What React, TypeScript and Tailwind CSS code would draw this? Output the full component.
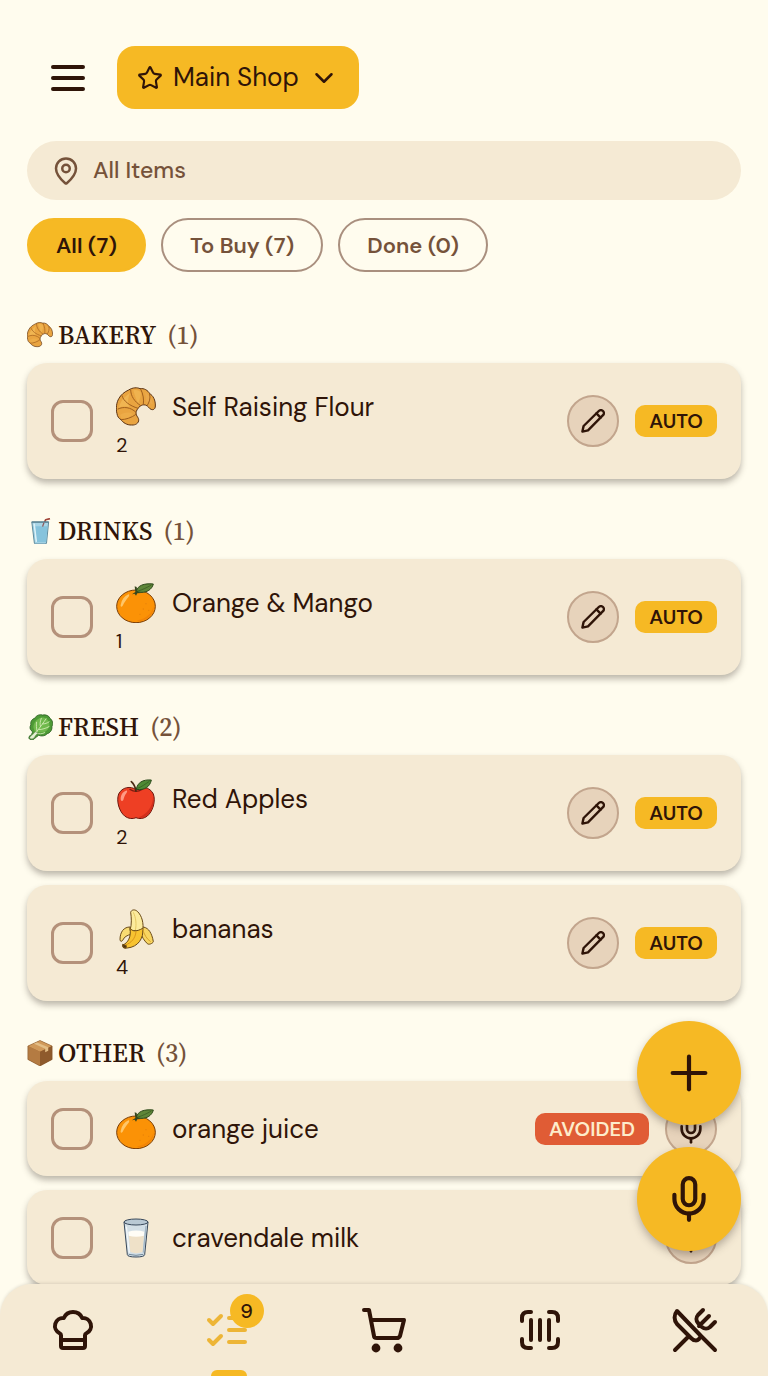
import React, { useState } from "react";
import { ChefHat, ChevronDown, MapPin, Mic, Plus, Star } from "lucide-react";

type EmojiName =
  | "croissant"
  | "cup"
  | "lettuce"
  | "orange"
  | "apple"
  | "banana"
  | "box"
  | "milk";

interface Item {
  id: string;
  name: string;
  emoji: EmojiName;
  qty?: number;
  badge?: "AUTO" | "AVOIDED";
  action: "edit" | "voice";
}

interface Section {
  title: string;
  emoji: EmojiName;
  count: number;
  items: Item[];
}

const sections: Section[] = [
  {
    title: "BAKERY",
    emoji: "croissant",
    count: 1,
    items: [
      { id: "flour", name: "Self Raising Flour", emoji: "croissant", qty: 2, badge: "AUTO", action: "edit" },
    ],
  },
  {
    title: "DRINKS",
    emoji: "cup",
    count: 1,
    items: [
      { id: "mango", name: "Orange & Mango", emoji: "orange", qty: 1, badge: "AUTO", action: "edit" },
    ],
  },
  {
    title: "FRESH",
    emoji: "lettuce",
    count: 2,
    items: [
      { id: "apples", name: "Red Apples", emoji: "apple", qty: 2, badge: "AUTO", action: "edit" },
      { id: "bananas", name: "bananas", emoji: "banana", qty: 4, badge: "AUTO", action: "edit" },
    ],
  },
  {
    title: "OTHER",
    emoji: "box",
    count: 3,
    items: [
      { id: "juice", name: "orange juice", emoji: "orange", badge: "AVOIDED", action: "voice" },
      { id: "milk", name: "cravendale milk", emoji: "milk", action: "voice" },
    ],
  },
];

const filters = [
  { id: "all", label: "All (7)" },
  { id: "buy", label: "To Buy (7)" },
  { id: "done", label: "Done (0)" },
];

// all food drawings share a 120x120 box
const drawings: Record<EmojiName, React.ReactNode> = {
  croissant: (
    <>
      <path
        d="M3 80C-1 66 1 46 9 34C14 24 26 14 38 9C50 1 64 1 72 5C84 3 96 10 101 20C111 25 119 40 118 57C118 66 112 70 105 67C99 65 97 56 88 54C76 51 66 61 61 73C57 85 67 89 68 98C69 108 59 115 47 114C33 115 20 106 15 98C8 94 4 88 3 80Z"
        fill="#E9A440"
        stroke="#5B3213"
        strokeWidth="3"
      />
      <path d="M9 62C12 44 24 30 42 18C36 32 34 44 40 60C28 58 18 58 9 62Z" fill="#F0B552" />
      <path d="M52 10C62 7 70 10 74 16C75 26 72 38 66 50C60 36 56 24 52 10Z" fill="#EFB34F" />
      <path d="M12 84C22 76 38 74 50 80C42 92 28 96 17 94Z" fill="#EDAC48" />
      <path d="M86 16C98 22 108 36 110 52C104 48 98 44 90 46C92 36 90 26 86 16Z" fill="#EBA94C" />
      <path
        d="M6 66C22 58 44 60 60 76M18 26C22 42 40 56 66 64M44 8C44 28 56 44 74 56M74 6C82 22 84 38 82 52M101 21C104 34 100 46 94 55M16 98C28 98 48 92 60 82"
        fill="none"
        stroke="#A05F1D"
        strokeWidth="3"
        strokeLinecap="round"
      />
    </>
  ),
  cup: (
    <>
      <path d="M78 26L86 8L106 3" fill="none" stroke="#A04438" strokeWidth="8" strokeLinejoin="round" />
      <path d="M22 18H100L90 116Q89 120 84 120H40Q35 120 34 116Z" fill="#A9D5E6" stroke="#4F7C90" strokeWidth="4" />
      <path d="M28 38H95L88 112H38Z" fill="#86C3DC" />
      <path d="M33 26L43 110" stroke="#DDF2F8" strokeWidth="7" />
      <path d="M22 19H100" stroke="#5B8293" strokeWidth="6" />
      <path d="M72 40L78 22" stroke="#8E5C5E" strokeWidth="6" />
    </>
  ),
  lettuce: (
    <>
      <path
        d="M22 78C12 72 12 58 18 50C14 36 24 22 36 20C42 6 60 0 72 5C86 1 102 8 106 20C118 28 122 46 115 58C117 74 106 88 93 91C84 102 66 104 54 98C48 104 42 106 36 112C30 122 14 121 9 112C7 104 16 98 22 92C26 87 26 82 22 78Z"
        fill="#4D9A35"
        stroke="#2F6325"
        strokeWidth="4"
      />
      <path d="M30 64C28 42 44 22 64 17C84 13 100 26 103 44C105 62 94 80 77 85C60 88 48 80 38 86Z" fill="#70B94C" />
      <path
        d="M22 108C42 86 62 60 88 22M46 80C44 64 42 50 44 38M62 58C58 44 62 32 66 20M54 72C70 72 88 66 102 58M72 46C82 46 94 42 102 36M44 88C56 94 70 92 82 86"
        fill="none"
        stroke="#D6EDB8"
        strokeWidth="4"
        strokeLinecap="round"
      />
      <path d="M38 82C32 92 18 100 13 108C14 118 28 116 34 108C38 100 44 94 50 88Z" fill="#E6F0D4" stroke="#6B8A58" strokeWidth="2" />
    </>
  ),
  orange: (
    <>
      <ellipse cx="60" cy="70" rx="58" ry="49" fill="#FB9206" stroke="#7A3E08" strokeWidth="3" />
      <path d="M70 115C100 110 113 90 113 68C108 92 90 108 62 112Z" fill="#F28408" />
      <path d="M14 66C17 50 25 40 37 34C40 33 41 37 38 41C30 50 25 58 20 68C17 73 13 72 14 66Z" fill="#FFC668" />
      <g fill="#E8820A">
        <circle cx="82" cy="78" r="2" />
        <circle cx="90" cy="62" r="2" />
        <circle cx="72" cy="94" r="2" />
        <circle cx="98" cy="82" r="2" />
      </g>
      <path d="M48 34L58 27L56 10L62 12L64 25L76 30L64 31L60 38L56 32Z" fill="#37461E" />
      <path d="M62 24C64 8 84 0 112 3C108 20 90 32 66 27Z" fill="#5E8638" stroke="#2F4A1C" strokeWidth="3" />
      <path d="M66 24C80 20 92 14 106 6" fill="none" stroke="#36531F" strokeWidth="2" />
    </>
  ),
  apple: (
    <>
      <path
        d="M60 32C44 20 18 24 8 45C0 66 10 98 26 111C38 120 50 120 60 116C70 120 82 120 94 111C110 98 120 66 112 45C102 24 76 20 60 32Z"
        fill="#EE3F24"
        stroke="#6B180F"
        strokeWidth="3"
      />
      <path d="M66 115C92 108 110 82 111 56C118 80 104 102 90 111C82 117 74 118 66 115Z" fill="#D22E1B" />
      <path d="M14 60C14 48 20 38 30 35C35 34 34 39 31 43C26 49 24 56 22 63C19 68 14 66 14 60Z" fill="#FF9A85" />
      <path d="M42 31Q60 43 78 31" fill="none" stroke="#7E1C10" strokeWidth="4" strokeLinecap="round" />
      <path d="M60 36C58 25 54 15 46 8" fill="none" stroke="#4A2A14" strokeWidth="5" strokeLinecap="round" />
      <path d="M61 31C64 11 80 1 106 3C102 23 86 35 61 31Z" fill="#4E8A34" stroke="#29491B" strokeWidth="3" />
      <path d="M65 28C78 23 88 15 100 7" fill="none" stroke="#2F5520" strokeWidth="2" />
    </>
  ),
  banana: (
    <g stroke="#6A4A17" strokeWidth="3" strokeLinejoin="round">
      <path d="M42 54C24 54 12 68 12 92C12 98 18 98 20 94C24 84 34 78 46 76Z" fill="#F9DC72" />
      <path d="M78 54C94 54 104 66 110 88L112 98C110 104 98 108 94 104C84 94 78 84 74 72Z" fill="#F8D561" />
      <path d="M42 64C48 46 46 24 44 10C46 2 56 0 64 7C78 20 84 44 80 66Z" fill="#FCEB9C" />
      <path d="M52 10C60 26 62 46 58 64" fill="none" stroke="#E5C863" />
      <path d="M42 58C50 68 62 68 80 58C84 88 66 114 34 117C24 119 18 114 20 108C36 102 46 84 42 58Z" fill="#F7C331" />
      <path d="M28 108C46 102 58 88 60 68" fill="none" stroke="#DA951A" />
      <path d="M80 60C84 76 92 90 104 98" fill="none" stroke="#D9A22A" />
      <path d="M20 106L31 110L30 117L22 116Z" fill="#4A2F12" />
    </g>
  ),
  box: (
    <>
      <path d="M60 2L116 28V90L60 120L4 90V28Z" fill="#A9713B" />
      <path d="M60 2L116 28L60 54L4 28Z" fill="#D0995A" />
      <path d="M4 28L60 54V120L4 90Z" fill="#B47B42" />
      <path d="M60 54L116 28V90L60 120Z" fill="#8E5A2C" />
      <path d="M44 10L98 34V50L84 56V40L30 16Z" fill="#E3BE86" />
      <path d="M60 2L116 28V90L60 120L4 90V28Z" fill="none" stroke="#7C4D26" strokeWidth="2" />
    </>
  ),
  milk: (
    <>
      <path d="M24 12L34 110Q35 117 60 117Q85 117 86 110L96 12Z" fill="#D3DFE6" stroke="#38485A" strokeWidth="3" />
      <path d="M38 50Q60 56 84 50L80 102Q60 109 43 102Z" fill="#EFE1C8" />
      <path d="M37 41Q60 34 85 41L84 53Q60 59 38 53Z" fill="#FFFDF6" />
      <path d="M90 24L82 104" stroke="#A2B6C4" strokeWidth="4" />
      <path d="M31 26L40 104" stroke="#F2F7FA" strokeWidth="4" />
      <ellipse cx="60" cy="12" rx="36" ry="9" fill="#B9C9D4" stroke="#38485A" strokeWidth="3" />
      <path d="M38 109Q60 115 82 109" fill="none" stroke="#71889A" strokeWidth="3" />
    </>
  ),
};

function Emoji({ name, className }: { name: EmojiName; className: string }) {
  return (
    <svg viewBox="0 0 120 120" className={className} aria-hidden="true">
      {drawings[name]}
    </svg>
  );
}

function PencilIcon() {
  return (
    <svg
      viewBox="0 0 24 24"
      className="size-6"
      fill="none"
      stroke="currentColor"
      strokeWidth="2.4"
      strokeLinecap="round"
      strokeLinejoin="round"
      aria-hidden="true"
    >
      <path d="M1.4 22.6L2.6 17L17.8 2A2.7 2.7 0 0 1 22 6.2L7 21.4Z" />
      <path d="M15.4 4.4L19.6 8.6" />
    </svg>
  );
}

function NavIcon({ children }: { children: React.ReactNode }) {
  return (
    <svg
      viewBox="0 0 48 48"
      className="size-12"
      fill="none"
      stroke="currentColor"
      strokeWidth="4"
      strokeLinecap="round"
      strokeLinejoin="round"
      aria-hidden="true"
    >
      {children}
    </svg>
  );
}

function ItemCard({ item }: { item: Item }) {
  const [checked, setChecked] = useState(false);

  return (
    <li className="flex min-h-[95px] items-center gap-4 rounded-[20px] bg-[#f5ead4] px-6 py-5 shadow-[0_4px_6px_rgba(60,50,40,0.34)]">
      <input
        id={item.id}
        type="checkbox"
        checked={checked}
        onChange={(e) => setChecked(e.target.checked)}
        className="mr-[7px] size-[42px] shrink-0 appearance-none rounded-xl border-3 border-[#b4917a] checked:bg-[#f6b924]"
      />
      <div className={item.qty ? "min-w-0 flex-1 pt-1" : "min-w-0 flex-1"}>
        <label htmlFor={item.id} className="flex items-center gap-4 text-[26px] leading-10">
          <Emoji name={item.emoji} className="size-10 shrink-0" />
          {item.name}
        </label>
        {item.qty && <p className="mt-1 text-xl leading-7">{item.qty}</p>}
      </div>
      {item.badge === "AVOIDED" && (
        <span className="rounded-[10px] bg-[#e05c35] px-3.5 text-xl leading-8 font-semibold text-[#fdeccb]">
          AVOIDED
        </span>
      )}
      {item.action === "edit" ? (
        <button
          aria-label={"Edit " + item.name}
          className="flex size-[52px] shrink-0 items-center justify-center rounded-full border-2 border-[#c2a58d] bg-[#e7d3bb]"
        >
          <PencilIcon />
        </button>
      ) : (
        <button
          aria-label={"Voice note for " + item.name}
          className="flex size-[52px] shrink-0 items-center justify-center rounded-full border-2 border-[#c2a58d] bg-[#e7d3bb]"
        >
          <Mic size={32} strokeWidth={2} />
        </button>
      )}
      {item.badge === "AUTO" && (
        <span className="rounded-[10px] bg-[#f6b924] px-3.5 text-xl leading-8 font-semibold">AUTO</span>
      )}
    </li>
  );
}

export default function App() {
  const [filter, setFilter] = useState("all");

  return (
    <div className="flex h-screen flex-col bg-[#fffcee] font-['DM_Sans','Inter',sans-serif] text-[#2f1408]">
      <main className="min-h-0 flex-1 overflow-y-auto px-[27px] [scrollbar-width:none]">
        <header className="flex items-center gap-8 pt-[46px] pl-6">
          <button aria-label="Menu">
            <svg viewBox="0 0 34 34" className="size-[34px]" stroke="currentColor" strokeWidth="4" strokeLinecap="round">
              <path d="M2 6H32M2 17H32M2 28H32" />
            </svg>
          </button>
          <button className="flex h-[63px] items-center gap-2.5 rounded-[18px] bg-[#f6b924] px-5 text-[26px]">
            <Star size={26} strokeWidth={2} />
            Main Shop
            <ChevronDown size={30} strokeWidth={2} />
          </button>
        </header>

        <button className="mt-8 flex h-[59px] w-full items-center gap-3 rounded-full bg-[#f5ead4] px-6 text-[23px] font-medium text-[#75523a]">
          <MapPin size={30} strokeWidth={2} />
          All Items
        </button>

        <div className="mt-[18px] flex gap-[15px]">
          {filters.map((f) => (
            <button
              key={f.id}
              aria-pressed={filter === f.id}
              onClick={() => setFilter(f.id)}
              className={
                filter === f.id
                  ? "h-[54px] rounded-full border-2 border-[#f6b924] bg-[#f6b924] px-[27px] text-[22px] font-semibold"
                  : "h-[54px] rounded-full border-2 border-[#a98f7e] px-[27px] text-[22px] font-semibold text-[#75523a]"
              }
            >
              {f.label}
            </button>
          ))}
        </div>

        <div className="pt-[11px]">
          {sections.map((section) => (
            <section key={section.title} className="pt-9">
              <h2 className="mb-3 flex items-center gap-[5px] font-['Source_Serif_4','Liberation_Serif',serif] text-[26px] leading-8 font-medium">
                <Emoji name={section.emoji} className="size-[26px]" />
                {section.title}
                <span className="ml-1.5 text-[#75523a]">({section.count})</span>
              </h2>
              <ul className="flex flex-col gap-3.5">
                {section.items.map((item) => (
                  <ItemCard key={item.id} item={item} />
                ))}
              </ul>
            </section>
          ))}
        </div>
      </main>

      <div className="fixed right-[27px] bottom-[125px] flex flex-col gap-[22px]">
        <button
          aria-label="Add item"
          className="flex size-[104px] items-center justify-center rounded-full bg-[#f6b924] shadow-[0_4px_8px_rgba(60,50,40,0.35)]"
        >
          <Plus size={56} strokeWidth={1.8} />
        </button>
        <button
          aria-label="Voice input"
          className="flex size-[104px] items-center justify-center rounded-full bg-[#f6b924] shadow-[0_4px_8px_rgba(60,50,40,0.35)]"
        >
          <Mic size={50} strokeWidth={2} />
        </button>
      </div>

      <nav className="flex h-[92px] shrink-0 justify-between rounded-t-[32px] bg-[#f5ead4] px-[49px] shadow-[0_-1px_3px_rgba(60,50,40,0.12)]">
        <a href="#recipes" aria-label="Recipes" className="flex w-12 items-center justify-center">
          <ChefHat size={48} strokeWidth={2} />
        </a>
        <a
          href="#list"
          aria-label="List"
          aria-current="page"
          className="relative flex w-12 items-center justify-center text-[#edb536]"
        >
          <NavIcon>
            <path d="M24 12H40M24 24H40M24 36H40M4 34L8 38L16 30M4 14L8 18L16 10" />
          </NavIcon>
          <span className="absolute top-[10px] left-[25px] size-[34px] rounded-full bg-[#f6b924] text-center text-xl leading-[34px] font-medium text-[#2f1408]">
            9
          </span>
          <span className="absolute bottom-0 h-1.5 w-9 rounded-t-md bg-[#f6b924]" />
        </a>
        <a href="#basket" aria-label="Basket" className="flex w-12 items-center justify-center">
          <NavIcon>
            <path d="M4 4H9L14 30Q14 32 17 32H37Q39 32 40 30L44 14H11" />
            <circle cx="16" cy="42" r="2.4" fill="currentColor" />
            <circle cx="38" cy="42" r="2.4" fill="currentColor" />
          </NavIcon>
        </a>
        <a href="#scan" aria-label="Scan" className="flex w-12 items-center justify-center">
          <NavIcon>
            <path d="M6 15V12Q6 6 12 6H15M33 6H36Q42 6 42 12V15M42 33V36Q42 42 36 42H33M15 42H12Q6 42 6 36V33M15 14V34M24 14V34M33 14V34" />
          </NavIcon>
        </a>
        <a href="#meals" aria-label="Meals" className="flex w-12 items-center justify-center">
          <NavIcon>
            <path d="M32 4L27 9A6 6 0 0 0 27 17L31 21A6 6 0 0 0 39 21L44 16M38 10L28 20" />
            <path d="M30 30L6 5A10 10 0 0 0 6 18L20 32C23 35 26 35 28 33L30 30L44 44M4 44L17 31" />
          </NavIcon>
        </a>
      </nav>
    </div>
  );
}
